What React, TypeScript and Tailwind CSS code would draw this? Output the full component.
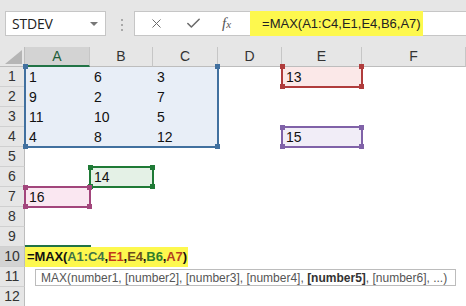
import { X, Check } from "lucide-react";

type Box = {
    place: string;
    fill: string;
    line: string;
    handle: string;
    noTop?: boolean;
};

const colHeads = [
    { name: "A", place: "col-start-2", active: true },
    { name: "B", place: "col-start-3" },
    { name: "C", place: "col-start-4" },
    { name: "D", place: "col-start-5" },
    { name: "E", place: "col-start-6" },
    { name: "F", place: "col-start-7" },
];

const rowPlace = [
    "row-start-2", "row-start-3", "row-start-4", "row-start-5", "row-start-6", "row-start-7",
    "row-start-8", "row-start-9", "row-start-10", "row-start-11", "row-start-12", "row-start-13",
];

const boxes: Box[] = [
    { place: "col-start-2 col-span-3 row-start-2 row-span-4", fill: "bg-[#e8eef7]", line: "border-[#41709f]", handle: "bg-[#41709f]", noTop: true },
    { place: "col-start-6 row-start-2", fill: "bg-[#fbe8e8]", line: "border-[#b03c3c]", handle: "bg-[#b03c3c]", noTop: true },
    { place: "col-start-6 row-start-5", fill: "bg-[#f1edf7]", line: "border-[#8062a8]", handle: "bg-[#8062a8]" },
    { place: "col-start-3 row-start-7", fill: "bg-[#e4f1e6]", line: "border-[#1f7a36]", handle: "bg-[#1f7a36]" },
    { place: "col-start-2 row-start-8", fill: "bg-[#fae7f1]", line: "border-[#a2467c]", handle: "bg-[#a2467c]" },
];

const values = [
    { v: "1", place: "col-start-2 row-start-2" },
    { v: "6", place: "col-start-3 row-start-2" },
    { v: "3", place: "col-start-4 row-start-2" },
    { v: "9", place: "col-start-2 row-start-3" },
    { v: "2", place: "col-start-3 row-start-3" },
    { v: "7", place: "col-start-4 row-start-3" },
    { v: "11", place: "col-start-2 row-start-4" },
    { v: "10", place: "col-start-3 row-start-4" },
    { v: "5", place: "col-start-4 row-start-4" },
    { v: "4", place: "col-start-2 row-start-5" },
    { v: "8", place: "col-start-3 row-start-5" },
    { v: "12", place: "col-start-4 row-start-5" },
    { v: "13", place: "col-start-6 row-start-2" },
    { v: "15", place: "col-start-6 row-start-5" },
    { v: "14", place: "col-start-3 row-start-7" },
    { v: "16", place: "col-start-2 row-start-8" },
];

function RangeBox({ place, fill, line, handle, noTop }: Box) {
    return (
        <div className={`${place} relative ${fill} ${line} border-2 ${noTop ? "border-t-0" : ""} -mx-px -mb-px ${noTop ? "" : "-mt-px"}`}>
            <div className={`absolute -left-[3px] -top-[3px] w-[5px] h-[5px] ${handle}`}></div>
            <div className={`absolute -right-[3px] -top-[3px] w-[5px] h-[5px] ${handle}`}></div>
            <div className={`absolute -left-[3px] -bottom-[3px] w-[5px] h-[5px] ${handle}`}></div>
            <div className={`absolute -right-[3px] -bottom-[3px] w-[5px] h-[5px] ${handle}`}></div>
        </div>
    );
}

function App() {
    return (
        <div className="relative w-[466px] h-[306px] overflow-hidden bg-white font-['Liberation_Sans',Arial,sans-serif]">
            {/* top bar */}
            <div className="flex items-start h-[47px] pt-[11px] pl-[5px] bg-[#e6e6e6]">
                <div className="flex justify-between items-center w-[101px] h-[25px] pl-[6px] pr-[7px] bg-white border border-[#c6c6c6]">
                    <span className="text-[14px] text-[#222] font-['Open_Sans',sans-serif] tracking-[-0.2px]">STDEV</span>
                    <span className="w-0 h-0 border-l-[4px] border-r-[4px] border-t-[4px] border-l-transparent border-r-transparent border-t-[#777]"></span>
                </div>

                <div className="flex flex-col gap-[3px] mt-[8px] ml-[15px]">
                    <span className="w-[2px] h-[2px] bg-[#a8a8a8]"></span>
                    <span className="w-[2px] h-[2px] bg-[#a8a8a8]"></span>
                    <span className="w-[2px] h-[2px] bg-[#a8a8a8]"></span>
                </div>

                <div className="flex-1 flex items-center h-[25px] ml-[11px] bg-white border border-[#c6c6c6] border-r-0">
                    <X size={15} strokeWidth={1.6} className="ml-[14px] text-[#6a6a6a]" />
                    <Check size={17} strokeWidth={2.2} className="ml-[21px] text-[#6a6a6a]" />
                    <span className="ml-[20px] text-[15px] italic text-[#555] font-['Liberation_Serif',serif]">f<span className="text-[11px]">x</span></span>
                    <div className="flex items-center w-[173px] h-[25px] -my-px ml-[19px] pl-[12px] bg-[#fdf84e] text-[13px] text-[#222]">
                        =MAX(A1:C4,E1,E4,B6,A7)
                    </div>
                </div>
            </div>

            {/* sheet */}
            <div className="grid grid-cols-[25px_65px_63px_65px_64px_80px_1fr] grid-rows-[20px_repeat(12,20px)] text-[14px] text-[#111]">
                <div className="col-start-1 row-start-1 relative bg-[#e6e6e6] border-r border-b border-[#bdbdbd]">
                    <svg className="absolute left-[5px] top-[3px]" width="17" height="14" viewBox="0 0 17 14">
                        <polygon points="17,0 17,14 0,14" fill="#b5b5b5" />
                    </svg>
                </div>
                {colHeads.map((h) => (
                    <div key={h.name} className={`${h.place} row-start-1 flex justify-center items-center border-r border-[#c6c6c6] ${h.active ? "bg-[#d3d3d3] text-[#1f5e3a] border-b-2 border-b-[#217346]" : "bg-[#e6e6e6] text-[#333] border-b border-b-[#bdbdbd]"}`}>
                        {h.name}
                    </div>
                ))}

                {rowPlace.map((p, i) => (
                    <div key={p} className={`col-start-1 ${p} flex justify-center items-center border-r border-b border-r-[#bdbdbd] border-b-[#d0d0d0] ${i === 9 ? "bg-[#d3d3d3] text-[#333]" : "bg-[#e6e6e6] text-[#333]"}`}>
                        {i + 1}
                    </div>
                ))}

                {boxes.map((b) => (
                    <RangeBox key={b.place} {...b} />
                ))}

                {values.map((c) => (
                    <div key={c.place} className={`${c.place} z-10 flex items-center pl-[4px] leading-none`}>
                        {c.v}
                    </div>
                ))}

                {/* active cell A10 with formula */}
                <div className="col-start-2 col-span-3 row-start-11 relative z-10 flex">
                    <div className="absolute left-0 -top-[2px] w-[66px] h-[12px] border-t-2 border-r-2 border-[#217346]"></div>
                    <div className="relative flex items-center w-[163px] h-full pl-[2px] bg-[#fdf84e] text-[13px] font-bold tracking-[-0.1px]">
                        <span className="text-[#111]">=MAX(</span>
                        <span className="text-[#3f7446]">A1:C4</span>
                        <span className="text-[#111]">,</span>
                        <span className="text-[#c2381c]">E1</span>
                        <span className="text-[#111]">,</span>
                        <span className="text-[#6b4a1c]">E4</span>
                        <span className="text-[#111]">,</span>
                        <span className="text-[#2f7d2c]">B6</span>
                        <span className="text-[#111]">,</span>
                        <span className="text-[#b4401f]">A7</span>
                        <span className="text-[#111]">)</span>
                    </div>
                </div>
            </div>

            {/* tooltip */}
            <div className="absolute left-[35px] top-[269px] flex items-center w-[421px] h-[17px] pl-[5px] bg-white border border-[#bcbcbc] text-[12px] text-[#555] whitespace-nowrap">
                <span>MAX(number1, [number2], [number3], [number4], <b className="text-[#333]">[number5]</b>, [number6], ...)</span>
            </div>
        </div>
    );
}

export default App;
